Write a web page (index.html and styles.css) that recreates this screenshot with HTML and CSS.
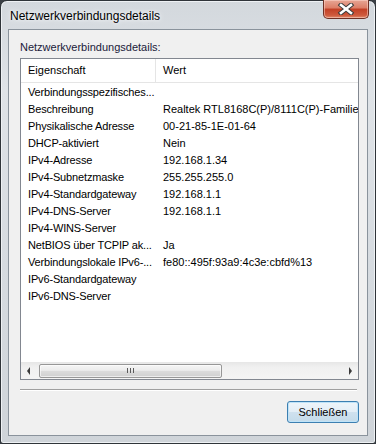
FILE: index.html
```html
<!DOCTYPE html>
<html lang="de">
<head>
    <meta charset="UTF-8">
    <title>Netzwerkverbindungsdetails</title>
    <link rel="stylesheet" href="styles.css">
</head>
<body>
    <div class="window">
        <div class="titlebar">
            <span class="title">Netzwerkverbindungsdetails</span>
            <button class="close" type="button" aria-label="Schließen">
                <svg width="18" height="12" viewBox="0 0 18 12">
                    <path d="M4 2 L14 10 M14 2 L4 10" stroke="#3b3b3b" stroke-width="4.6" stroke-linecap="square"/>
                    <path d="M4 2 L14 10 M14 2 L4 10" stroke="#ffffff" stroke-width="2.6" stroke-linecap="square"/>
                </svg>
            </button>
        </div>

        <div class="client">
            <div class="caption">Netzwerkverbindungsdetails:</div>

            <div class="list">
                <div class="list-head">
                    <div class="head-col first">Eigenschaft</div>
                    <div class="head-col">Wert</div>
                </div>

                <div class="rows">
                    <div class="row"><span>Verbindungsspezifisches...</span><span></span></div>
                    <div class="row"><span>Beschreibung</span><span>Realtek RTL8168C(P)/8111C(P)-Familie-P</span></div>
                    <div class="row"><span>Physikalische Adresse</span><span>00-21-85-1E-01-64</span></div>
                    <div class="row"><span>DHCP-aktiviert</span><span>Nein</span></div>
                    <div class="row"><span>IPv4-Adresse</span><span>192.168.1.34</span></div>
                    <div class="row"><span>IPv4-Subnetzmaske</span><span>255.255.255.0</span></div>
                    <div class="row"><span>IPv4-Standardgateway</span><span>192.168.1.1</span></div>
                    <div class="row"><span>IPv4-DNS-Server</span><span>192.168.1.1</span></div>
                    <div class="row"><span>IPv4-WINS-Server</span><span></span></div>
                    <div class="row"><span>NetBIOS über TCPIP ak...</span><span>Ja</span></div>
                    <div class="row"><span>Verbindungslokale IPv6-...</span><span>fe80::495f:93a9:4c3e:cbfd%13</span></div>
                    <div class="row"><span>IPv6-Standardgateway</span><span></span></div>
                    <div class="row"><span>IPv6-DNS-Server</span><span></span></div>
                </div>

                <div class="hscroll">
                    <span class="arrow arrow-left"></span>
                    <div class="track">
                        <div class="thumb"><span class="grip"></span></div>
                    </div>
                    <span class="arrow arrow-right"></span>
                </div>
            </div>

            <div class="sep"></div>

            <div class="actions">
                <button class="btn" type="button">Schließen</button>
            </div>
        </div>
    </div>
</body>
</html>
```

FILE: styles.css
```css
body {
    margin: 0;
    padding: 0;
    background-color: #3a3f45;
    font-family: 'Liberation Sans', Arial, sans-serif;
}

.window {
    width: 376px;
    height: 444px;
    box-sizing: border-box;
    border: 1px solid #2f3439;
    border-radius: 7px 7px 3px 3px;
    padding: 0 7px 7px 7px;
    display: flex;
    flex-direction: column;
    background: linear-gradient(180deg, #d3d8dd 0%, #dfe3e7 20%, #d6dbe0 60%, #cfd4d9 100%);
    box-shadow: inset 0 0 0 1px #eef1f4;
}

.titlebar {
    height: 28px;
    flex: none;
    display: flex;
    justify-content: space-between;
    align-items: flex-start;
}

.title {
    font-size: 12px;
    color: #000;
    margin: 8px 0 0 2px;
    text-shadow: 0 0 6px #f4f6f8, 0 0 3px #f4f6f8;
}

.close {
    width: 46px;
    height: 19px;
    margin: -1px -1px 0 0;
    padding: 0;
    border: 1px solid #6e3025;
    border-top: none;
    border-radius: 0 0 5px 5px;
    background: linear-gradient(180deg, #e7a695 0%, #dc7d66 45%, #c23f25 50%, #cf5a3d 85%, #e08c6e 100%);
    box-shadow: inset 0 0 0 1px rgba(255, 220, 210, 0.5);
    display: flex;
    align-items: center;
    justify-content: center;
}

.client {
    flex: 1;
    background-color: #f0f0f0;
    border: 1px solid #8a939c;
    padding: 11px 9px 0 11px;
    display: flex;
    flex-direction: column;
}

.caption {
    font-size: 11px;
    line-height: 13px;
    color: #1a1a3a;
    margin-bottom: 4px;
}

.list {
    width: 339px;
    height: 322px;
    box-sizing: border-box;
    border: 1px solid #828790;
    background-color: #fff;
    display: flex;
    flex-direction: column;
    overflow: hidden;
}

.list-head {
    height: 24px;
    flex: none;
    display: grid;
    grid-template-columns: 135px 1fr;
    border-bottom: 1px solid #e5e5e5;
    box-sizing: border-box;
}

.head-col {
    font-size: 11px;
    line-height: 23px;
    padding-left: 7px;
    color: #000;
}

.head-col.first {
    border-right: 1px solid #e5e5e5;
}

.rows {
    flex: 1;
    padding-top: 1px;
}

.row {
    height: 17px;
    display: grid;
    grid-template-columns: 135px 1fr;
    font-size: 11px;
    line-height: 17px;
    color: #000;
    white-space: nowrap;
}

.row span {
    padding-left: 7px;
    overflow: hidden;
}

.row span:first-child {
    padding-left: 7px;
    letter-spacing: -0.15px;
    overflow: visible;
}

.hscroll {
    height: 17px;
    flex: none;
    display: flex;
    align-items: center;
    background: linear-gradient(180deg, #e6e6e6 0%, #f0f0f0 30%, #f4f4f4 100%);
}

.arrow {
    width: 17px;
    height: 17px;
    flex: none;
    position: relative;
}

.arrow::after {
    content: "";
    position: absolute;
    top: 5px;
    border-top: 4px solid transparent;
    border-bottom: 4px solid transparent;
}

.arrow-left::after {
    left: 6px;
    border-right: 3px solid #3a3a3a;
}

.arrow-right::after {
    left: 8px;
    border-left: 3px solid #3a3a3a;
}

.track {
    flex: 1;
    height: 17px;
    display: flex;
    align-items: center;
}

.thumb {
    width: 183px;
    height: 14px;
    margin-left: 1px;
    box-sizing: border-box;
    border: 1px solid #979797;
    border-radius: 2px;
    background: linear-gradient(180deg, #f5f5f5 0%, #ececec 45%, #dcdcdc 50%, #d0d0d0 100%);
    box-shadow: inset 0 0 0 1px rgba(255, 255, 255, 0.6);
    display: flex;
    align-items: center;
    justify-content: center;
}

.grip {
    width: 7px;
    height: 5px;
    background: repeating-linear-gradient(90deg, #5a5a5a 0 1px, transparent 1px 3px);
}

.sep {
    width: 337px;
    height: 1px;
    margin-top: 9px;
    background-color: #a0a0a0;
    border-bottom: 1px solid #fff;
}

.actions {
    display: flex;
    justify-content: flex-end;
    width: 339px;
    margin-top: 10px;
}

.btn {
    width: 72px;
    height: 22px;
    padding: 0;
    font-family: 'Liberation Sans', Arial, sans-serif;
    font-size: 11px;
    color: #000;
    border: 1px solid #3c7fb1;
    border-radius: 3px;
    background: linear-gradient(180deg, #eef5fa 0%, #e3eef6 48%, #cfe1ee 52%, #c4dbea 100%);
    box-shadow: inset 0 0 0 1px #bfe3f8;
}
```
